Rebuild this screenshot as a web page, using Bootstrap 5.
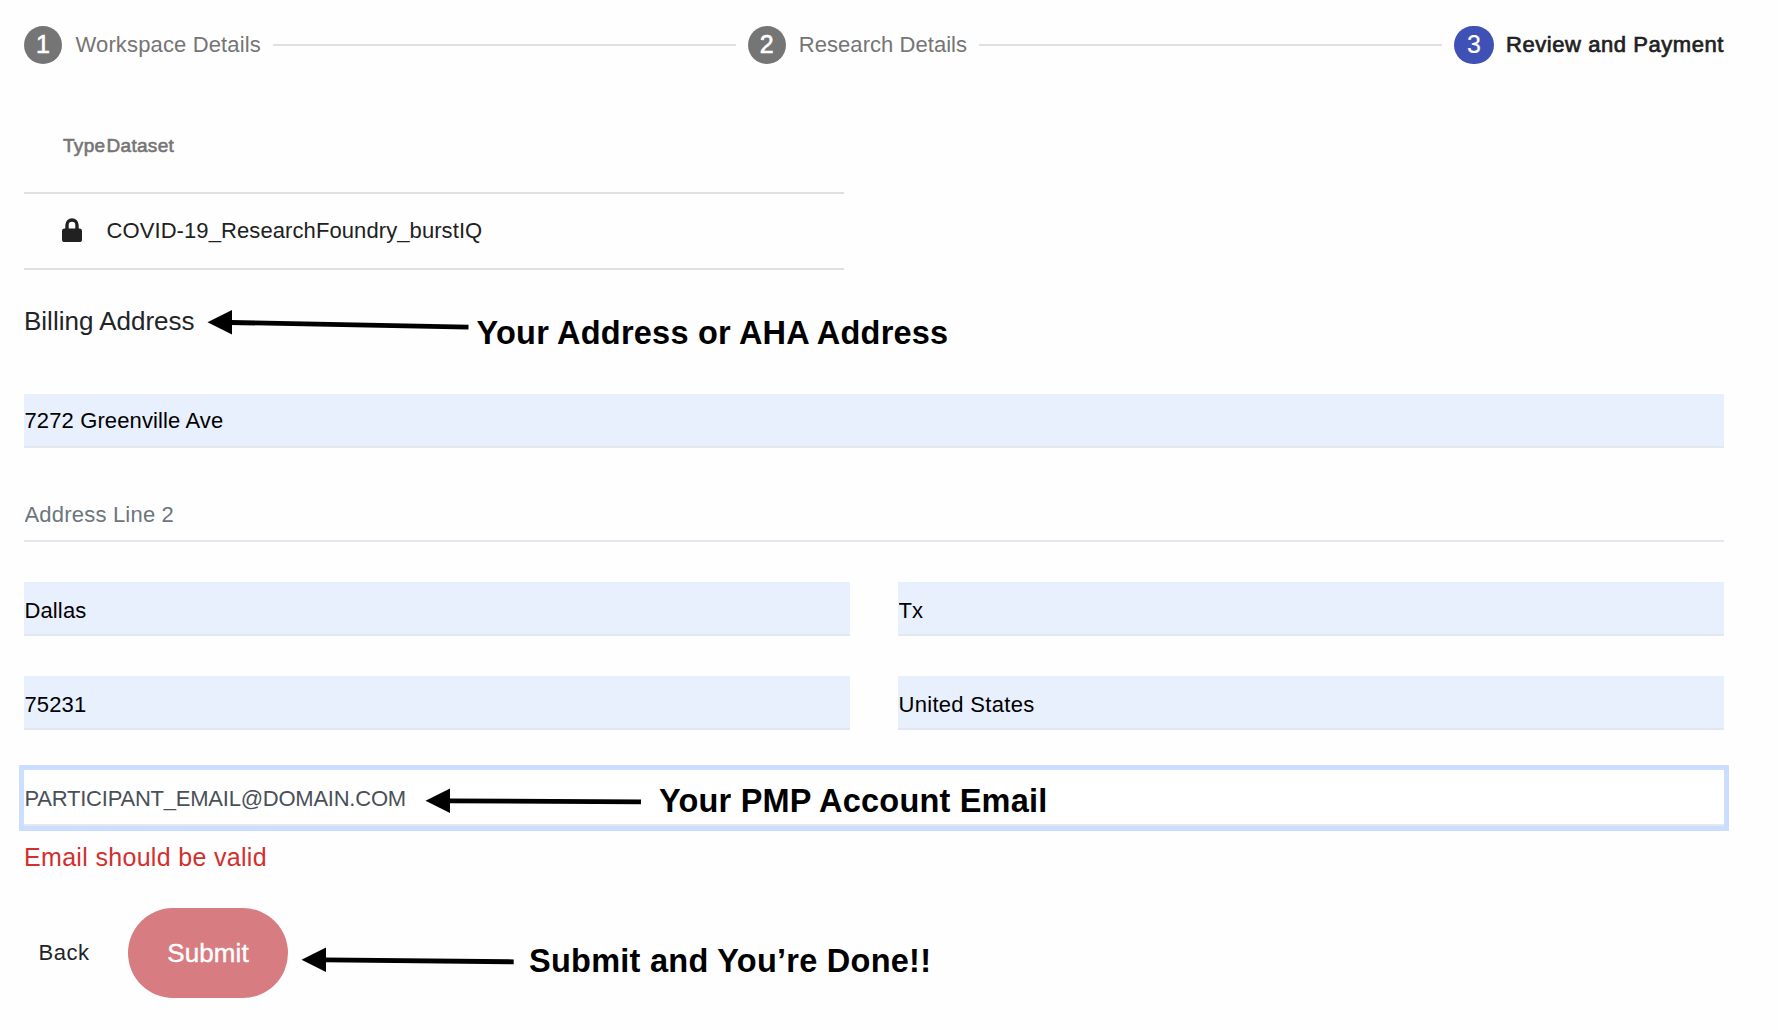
<!DOCTYPE html>
<html lang="en">
<head>
<meta charset="utf-8">
<meta name="viewport" content="width=device-width, initial-scale=1">
<title>Review and Payment</title>
<link href="https://cdn.jsdelivr.net/npm/bootstrap@5.3.0/dist/css/bootstrap.min.css" rel="stylesheet">
<style>
body{font-family:"Liberation Sans",Arial,sans-serif;font-size:22px;line-height:26px;color:#212121;background:#fefefe;overflow:hidden}
.page{width:1700px;margin-left:24px;padding-top:26px}
.stepper{height:38px;color:#757575}
.step-num{width:38px;height:38px;border-radius:19px;background:#757575;color:#fff;font-size:25px;line-height:36px;-webkit-text-stroke:.6px #fff}
.step-num.active{width:40px;background:#3f51b5;-webkit-text-stroke:.2px #fff}
.step-label{letter-spacing:.14px;margin-left:13.5px;white-space:nowrap}
.step-label.tight{letter-spacing:.05px;margin-left:13px}
.step-label.active{color:#212121;-webkit-text-stroke:.7px #212121;letter-spacing:.56px;margin-left:12px}
.step-line{height:2px;background:#e0e0e0;margin:0 12px}
.datasets{width:820px;margin-top:30px}
.ds-head{height:100px;border-bottom:2px solid #e0e0e0;padding:5px 0 0 39px;font-size:19px;color:#757575;-webkit-text-stroke:.6px #757575;letter-spacing:.3px}
.ds-head .c-type{width:43.5px}
.ds-row{height:76px;border-bottom:2px solid #e0e0e0;padding-left:38px;letter-spacing:.09px}
.ds-row .c-type{width:44.5px}
.ds-row svg{margin-top:-2px}
.billing{margin-top:30px;height:60px}
.billing h2{font-size:26px;line-height:30px;font-weight:400;margin:6px 0 0;white-space:nowrap;color:#212529}
.note{font-weight:700;font-size:32.5px;line-height:36px;color:#000;white-space:nowrap}
.ann1{margin:10px 0 0 12px}
.ann1-text{margin:15px 0 0 8px;letter-spacing:.22px}
.ann2{margin-top:18px}
.ann2-text{margin:13px 0 0 17px;letter-spacing:.2px}
.ann3{margin:14px 0 0 13px}
.ann3-text{margin:15px 0 0 15px;letter-spacing:.26px}
.field.form-control{height:54px;border:0;border-bottom:2px solid #e4e7ee;border-radius:0;padding:2px 0 0 .5px;font-size:22px;color:#000;background:transparent;box-shadow:none;letter-spacing:.12px}
.field.form-control::placeholder{color:#6c757d;letter-spacing:.2px}
.field.form-control.filled{background:#e8effd}
.field.form-control.low{padding-top:5px}
.address{margin-top:34px}
.pair{gap:48px}
.form-stack{gap:40px}
.field.form-control.email{height:56px;padding-top:3px;color:#495057;letter-spacing:-.23px;background:#fff;box-shadow:0 0 0 5px #cbdeff}
.field.form-control.country{letter-spacing:.3px}
.email-note{left:401px;top:0;height:56px}
.err{color:#d32f2f;font-size:25px;line-height:30px;letter-spacing:.32px;margin:16px 0 0}
.actions{margin-top:36px;height:90px}
.back.btn{font-size:22px;line-height:26px;padding:0;border:0;color:#212529;margin-left:14.5px;letter-spacing:.5px;width:89.5px;text-align:left}
.submit.btn{width:160px;height:90px;border-radius:45px;background:#d77c80;color:#fff;font-size:26px;border:0;padding:1px 0 0;-webkit-text-stroke:.4px #fff;letter-spacing:.1px}
</style>
</head>
<body>
<main class="page">
  <div class="stepper d-flex align-items-center">
    <span class="step-num d-flex justify-content-center">1</span><span class="step-label">Workspace Details</span>
    <span class="step-line flex-fill"></span>
    <span class="step-num d-flex justify-content-center">2</span><span class="step-label tight">Research Details</span>
    <span class="step-line flex-fill"></span>
    <span class="step-num active d-flex justify-content-center">3</span><span class="step-label active">Review and Payment</span>
  </div>

  <div class="datasets">
    <div class="ds-head d-flex align-items-center"><span class="c-type">Type</span><span>Dataset</span></div>
    <div class="ds-row d-flex align-items-center">
      <span class="c-type d-flex"><svg width="20" height="24" viewBox="0 0 20 24"><rect x="0" y="10.5" width="20" height="13.5" rx="2.6" fill="#212121"/><path d="M5 12V7a5 5 0 0 1 10 0v5" fill="none" stroke="#212121" stroke-width="3.4"/></svg></span>
      <span>COVID-19_ResearchFoundry_burstIQ</span>
    </div>
  </div>

  <div class="billing d-flex align-items-start">
    <h2>Billing Address</h2>
    <svg class="flex-shrink-0 ann1" width="262" height="26" viewBox="207 310 262 26"><path d="M207.5 322.3 232 310v24.5z"/><path d="M231 322.5 468.5 327.2" stroke="#000" stroke-width="4.8"/></svg>
    <span class="note ann1-text">Your Address or AHA Address</span>
  </div>

  <form class="address d-flex flex-column form-stack" onsubmit="return false">
    <input class="form-control field filled" value="7272 Greenville Ave">
    <input class="form-control field" placeholder="Address Line 2">
    <div class="d-flex pair">
      <input class="form-control field filled low" value="Dallas">
      <input class="form-control field filled low" value="Tx">
    </div>
    <div class="d-flex pair">
      <input class="form-control field filled low" value="75231">
      <input class="form-control field filled low country" value="United States">
    </div>
    <div class="position-relative">
      <input class="form-control field email" value="PARTICIPANT_EMAIL@DOMAIN.COM">
      <div class="email-note position-absolute d-flex align-items-start">
        <svg class="ann2" width="217" height="26" viewBox="425 788 217 26"><path d="M425.5 800.8 450 788.5V813z"/><path d="M449 800.8 641 801.8" stroke="#000" stroke-width="4.8"/></svg>
        <span class="note ann2-text">Your PMP Account Email</span>
      </div>
    </div>
  </form>
  <div class="err">Email should be valid</div>

  <div class="actions d-flex align-items-center">
    <button class="btn back" type="button">Back</button>
    <button class="btn submit" type="button">Submit</button>
    <svg class="ann3" width="213" height="26" viewBox="301 947 213 26"><path d="M301.5 959.8 326 947.5V972z"/><path d="M325 959.9 513.7 961.8" stroke="#000" stroke-width="4.8"/></svg>
    <span class="note ann3-text">Submit and You’re Done!!</span>
  </div>
</main>
<script src="https://cdn.jsdelivr.net/npm/bootstrap@5.3.0/dist/js/bootstrap.bundle.min.js"></script>
</body>
</html>
